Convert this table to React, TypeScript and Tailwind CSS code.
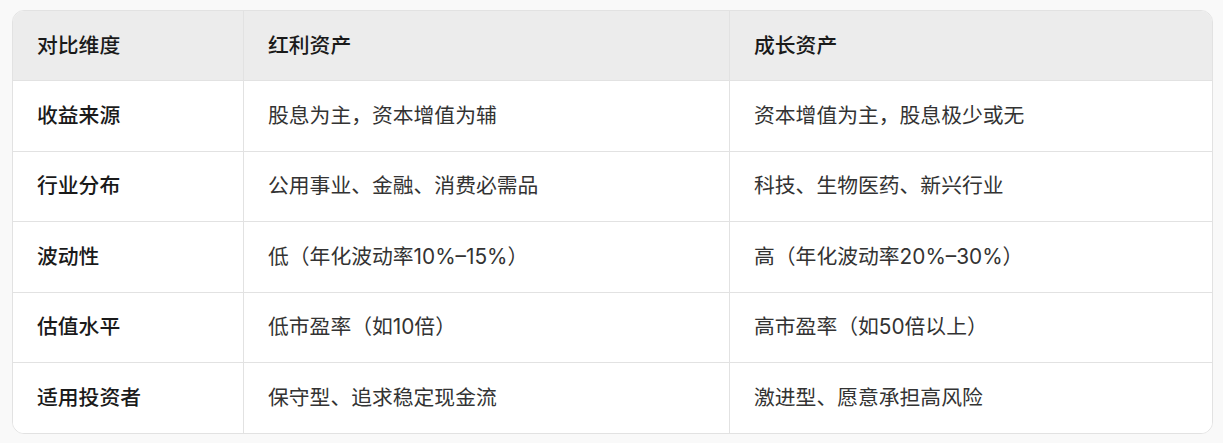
const rows = [
  ['收益来源', '股息为主，资本增值为辅', '资本增值为主，股息极少或无'],
  ['行业分布', '公用事业、金融、消费必需品', '科技、生物医药、新兴行业'],
  ['波动性', '低（年化波动率10%–15%）', '高（年化波动率20%–30%）'],
  ['估值水平', '低市盈率（如10倍）', '高市盈率（如50倍以上）'],
  ['适用投资者', '保守型、追求稳定现金流', '激进型、愿意承担高风险'],
];

function Row({ cells, head }: { cells: string[]; head?: boolean }) {
  const other = head ? 'font-medium text-[#1a1a1a]' : 'text-[#333333]';
  return (
    <div className={`flex items-center ${head ? 'h-[69px] bg-[#ececec]' : 'h-[70.5px] border-t border-[#e2e2e2] bg-white'}`}>
      <div className="flex h-full w-[231px] shrink-0 items-center border-r border-[#e2e2e2] px-6 font-medium text-[#1a1a1a]">
        {cells[0]}
      </div>
      <div className={`flex h-full w-[486px] shrink-0 items-center border-r border-[#e2e2e2] px-6 ${other}`}>
        {cells[1]}
      </div>
      <div className={`flex h-full flex-1 items-center px-6 ${other}`}>{cells[2]}</div>
    </div>
  );
}

export default function App() {
  return (
    <div
      className="h-[443px] w-[1223px] bg-[#f9f9f9] pt-[10px] pl-3 text-[20.8px] leading-[30px]"
      style={{ fontFamily: 'Inter, "Noto Sans CJK SC", sans-serif' }}
    >
      <div className="w-[1201px] overflow-hidden rounded-xl border border-[#e2e2e2] bg-white">
        <Row head cells={['对比维度', '红利资产', '成长资产']} />
        {rows.map((r) => (
          <Row key={r[0]} cells={r} />
        ))}
      </div>
    </div>
  );
}
